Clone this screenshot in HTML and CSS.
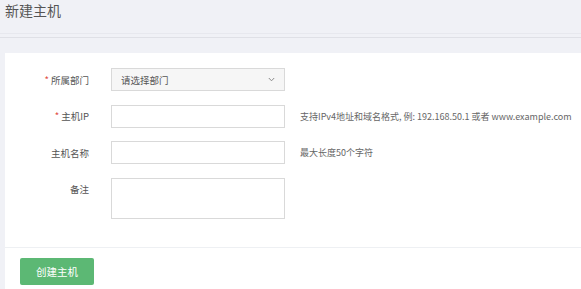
FILE: index.html
```html
<!DOCTYPE html>
<html lang="zh">
<head>
<meta charset="utf-8">
<link rel="stylesheet" href="styles.css">
</head>
<body>
<div class="page-header">
  <h1 class="page-title">新建主机</h1>
</div>
<div class="header-rule"></div>
<div class="card">
  <form class="form">
    <div class="row">
      <label class="label"><span class="req">*</span> 所属部门</label>
      <div class="select">
        <span class="select-text">请选择部门</span>
        <svg class="chev" width="7" height="5" viewBox="0 0 7 5"><path d="M0.8 1 L3.5 3.8 L6.2 1" fill="none" stroke="#8a8a8a" stroke-width="1"/></svg>
      </div>
    </div>
    <div class="row">
      <label class="label"><span class="req">*</span> 主机IP</label>
      <input class="input" type="text">
      <span class="hint">支持IPv4地址和域名格式, 例: 192.168.50.1 或者 www.example.com</span>
    </div>
    <div class="row">
      <label class="label">主机名称</label>
      <input class="input" type="text">
      <span class="hint">最大长度50个字符</span>
    </div>
    <div class="row row-top">
      <label class="label label-top">备注</label>
      <textarea class="textarea"></textarea>
    </div>
  </form>
  <div class="footer">
    <button class="btn" type="button">创建主机</button>
  </div>
</div>
</body>
</html>
```
FILE: styles.css
```css
html, body {
  margin: 0;
  padding: 0;
}
body {
  background: #f0f1f6;
  font-family: "Noto Sans CJK SC", "Noto Sans", sans-serif;
  color: #555;
  height: 100vh;
  display: flex;
  flex-direction: column;
  overflow: hidden;
}
.page-header {
  height: 33px;
  border-bottom: 1px solid #e7e8ee;
  padding-left: 5px;
  flex: none;
}
.page-title {
  margin: 0;
  font-size: 14px;
  font-weight: normal;
  line-height: 20px;
  color: #555;
}
.header-rule {
  margin-top: 3px;
  border-top: 1px solid #dfe0e6;
  flex: none;
}
.card {
  margin-top: 15px;
  margin-left: 5px;
  background: #fff;
  flex: 1;
  min-height: 0;
}
.form {
  padding-top: 15px;
  display: flex;
  flex-direction: column;
  gap: 13.5px;
}
.row {
  display: flex;
  align-items: center;
  height: 23px;
}
.row-top {
  align-items: flex-start;
  height: 41px;
}
.label {
  width: 84px;
  margin-right: 22px;
  text-align: right;
  font-size: 9.5px;
  color: #555;
  flex: none;
}
.label-top {
  padding-top: 4px;
}
.req {
  color: #e0483c;
}
.select {
  box-sizing: border-box;
  width: 174px;
  height: 23px;
  border: 1px solid #d9d9d9;
  background: #f6f6f6;
  display: flex;
  align-items: center;
  justify-content: space-between;
  padding: 0 9px;
  flex: none;
}
.select-text {
  font-size: 9.5px;
  color: #555;
}
.chev {
  display: block;
}
.input {
  box-sizing: border-box;
  width: 174px;
  height: 23px;
  border: 1px solid #d9d9d9;
  margin: 0;
  padding: 0 6px;
  flex: none;
  background: #fff;
}
.textarea {
  box-sizing: border-box;
  width: 174px;
  height: 41px;
  border: 1px solid #d9d9d9;
  margin: 0;
  padding: 4px 6px;
  resize: none;
  flex: none;
}
.hint {
  margin-left: 15px;
  font-size: 9px;
  color: #666;
  white-space: nowrap;
}
.footer {
  margin-top: 28px;
  border-top: 1px solid #eef0f3;
  padding: 9px 0 0 15px;
}
.btn {
  width: 74px;
  height: 27px;
  background: #5cb874;
  border: none;
  border-radius: 2px;
  color: #fff;
  font-family: "Noto Sans CJK SC", sans-serif;
  font-size: 10.5px;
  padding: 0;
}
```
